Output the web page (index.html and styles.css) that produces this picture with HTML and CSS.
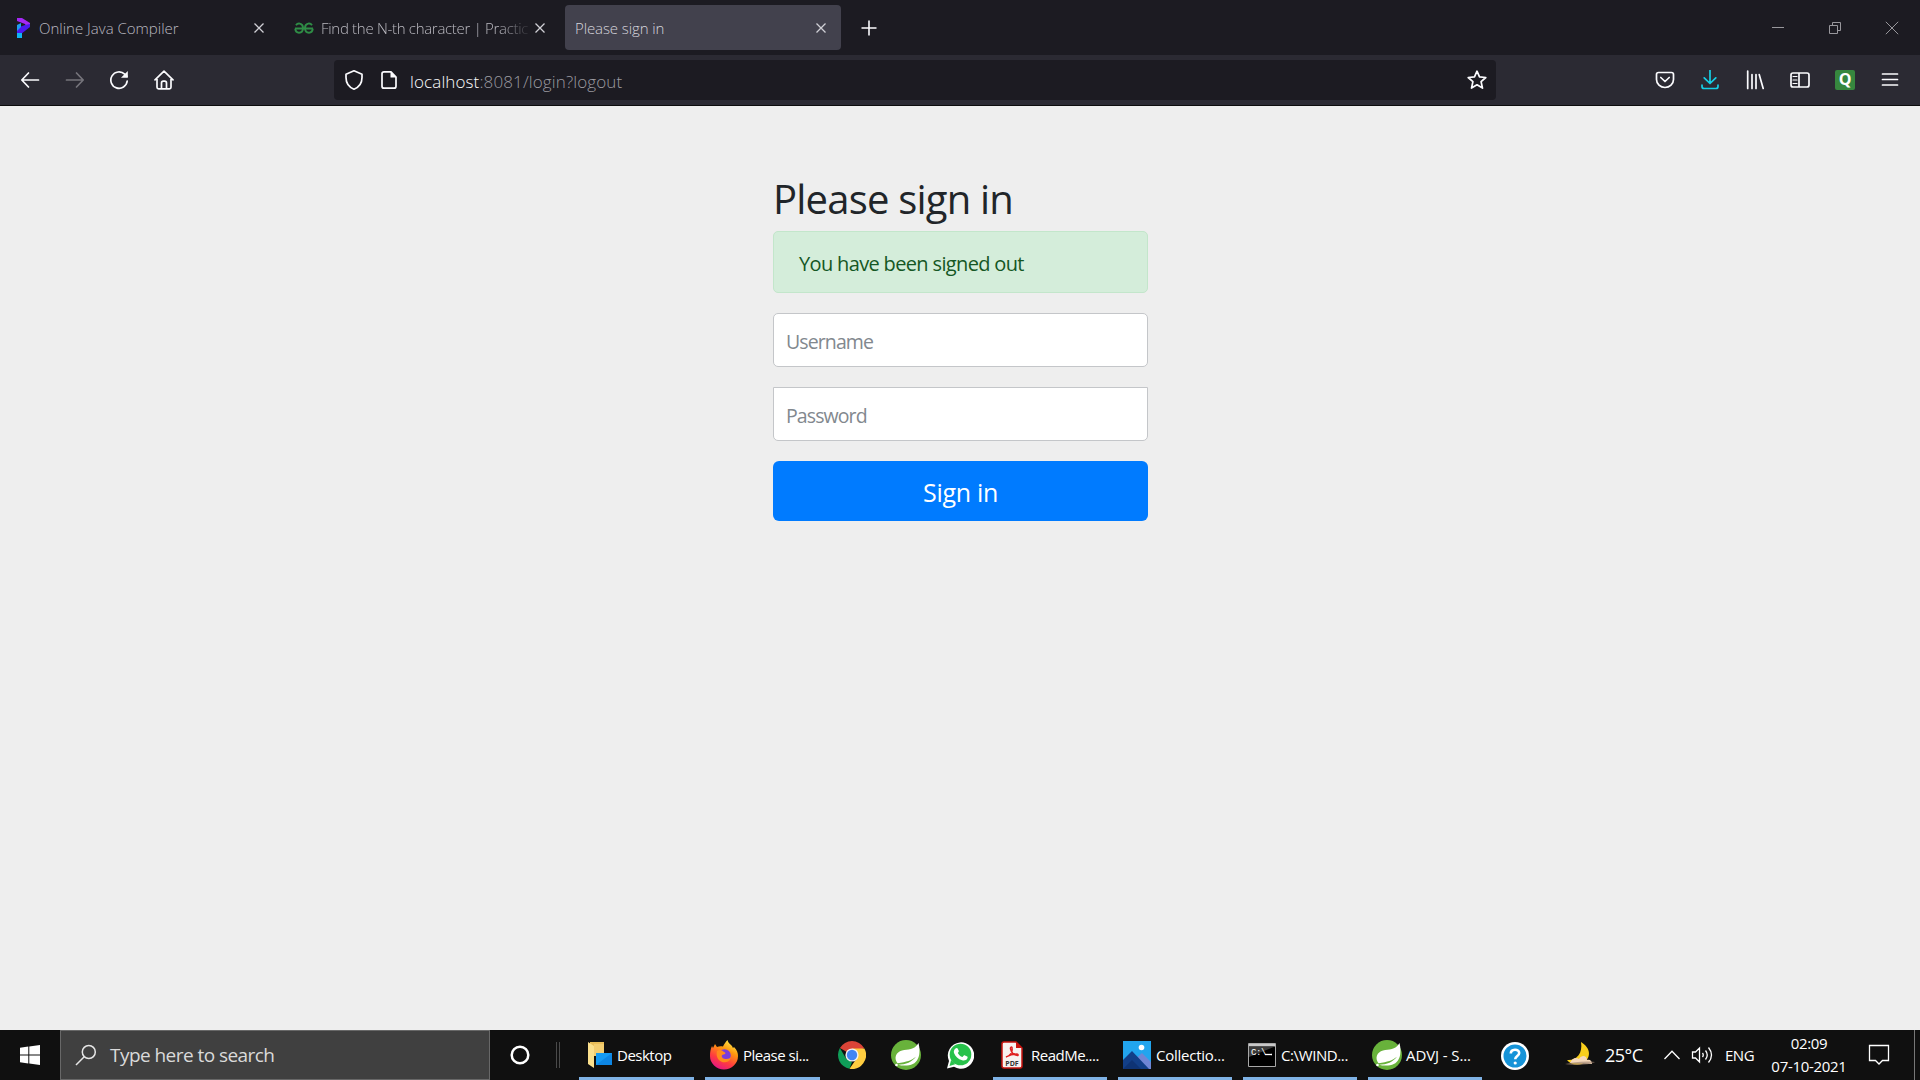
FILE: index.html
```html
<!DOCTYPE html>
<html lang="en">
<head>
<meta charset="utf-8">
<title>Please sign in</title>
<link rel="stylesheet" href="styles.css">
</head>
<body>
<header class="tabbar">
  <div class="tab">
    <svg class="tab-icon" width="20" height="22" viewBox="0 0 20 22"><path d="M4 1h5l8 5v3l-3 2-2-4-8-3z" fill="#a428f5"/><path d="M17 7v3l-9 7-4-1v-5l8-3z" fill="#4b19f0"/><path d="M4 8l4-2v4l-4 4z" fill="#1f9df0"/><path d="M4 16h5v5H4z" fill="#10b4f5"/></svg>
    <span class="tab-title">Online Java Compiler</span>
    <svg class="tab-close" width="12" height="12" viewBox="0 0 12 12"><path d="M1.5 1.5l9 9m0-9l-9 9"/></svg>
  </div>
  <div class="tab">
    <svg class="tab-icon" width="20" height="22" viewBox="0 0 20 22" fill="none" stroke="#2f8d46" stroke-width="1.9"><path d="M1 11.5h18M2 8.2c1-1.5 2.6-2 4-1.6 2 .5 3 2.2 3 4.4 0 3-1.7 4.7-4 4.7-2.2 0-3.5-1.4-3.8-4M18 8.2c-1-1.5-2.6-2-4-1.6-2 .5-3 2.2-3 4.4 0 3 1.7 4.7 4 4.7 2.2 0 3.5-1.4 3.8-4"/></svg>
    <span class="tab-title fade">Find the N-th character | Practic</span>
    <svg class="tab-close" width="12" height="12" viewBox="0 0 12 12"><path d="M1.5 1.5l9 9m0-9l-9 9"/></svg>
  </div>
  <div class="tab active">
    <span class="tab-title">Please sign in</span>
    <svg class="tab-close" width="12" height="12" viewBox="0 0 12 12"><path d="M1.5 1.5l9 9m0-9l-9 9"/></svg>
  </div>
  <svg class="new-tab" width="16" height="16" viewBox="0 0 16 16"><path d="M8 .5v15M.5 8h15"/></svg>
  <div class="window-controls">
    <svg width="14" height="14" viewBox="0 0 14 14"><path d="M1 6.5h12"/></svg>
    <svg width="14" height="14" viewBox="0 0 14 14"><path d="M1.5 4.5h8v8h-8zM4.5 4.5v-3h8v8h-3"/></svg>
    <svg width="14" height="14" viewBox="0 0 14 14"><path d="M.8.8l12.4 12.400M13.2.8L.8 13.2"/></svg>
  </div>
</header>

<nav class="toolbar">
  <div class="nav-buttons">
    <svg width="20" height="20" viewBox="0 0 20 20"><path d="M18.5 10H2M8.5 3L1.800 10l6.700 7"/></svg>
    <svg class="disabled" width="20" height="20" viewBox="0 0 20 20"><path d="M1.500 10H18M11.500 3l6.700 7-6.700 7"/></svg>
    <svg width="20" height="20" viewBox="0 0 20 20"><path d="M18.200 11a8.200 8.200 0 1 1-2.500-6.800L18 6.300"/><path class="solid" d="M18.800 1v6.800H12z"/></svg>
    <svg width="20" height="20" viewBox="0 0 20 20"><path d="M1 9.800l9-8.600 9 8.600M3 9v8.200q0 1.600 1.600 1.600h10.800q1.600 0 1.600-1.600V9M7.500 18.500V13q0-1.800 1.800-1.800h1.400q1.800 0 1.800 1.800v5.500"/></svg>
  </div>
  <div class="urlbar">
    <svg width="20" height="22" viewBox="0 0 20 22"><path d="M10 1.800L2 5.200v3.300c0 5.800 3 9.700 8 11.700 5-2 8-5.900 8-11.700V5.200z"/></svg>
    <svg width="18" height="20" viewBox="0 0 18 20"><path d="M11 1.800H4Q2 1.800 2 3.800v12.400q0 2 2 2h10q2 0 2-2V7z"/><path class="solid" d="M10.500 1.500V7.500H16.500z"/></svg>
    <span class="url">localhost<span class="url-path">:8081/login?logout</span></span>
    <svg class="star" width="22" height="22" viewBox="0 0 22 22"><path d="M11 2.200l2.500 5.700 6.300.6-4.700 4.200 1.400 6.400-5.500-3.300-5.500 3.300 1.400-6.400L2.200 8.500l6.300-.6z"/></svg>
  </div>
  <div class="toolbar-actions">
    <svg width="20" height="20" viewBox="0 0 20 20"><path d="M3.500 2.500h13q2 0 2 2V9.500a8.500 8 0 0 1-17 0V4.500q0-2 2-2z"/><path d="M5.800 7.500L10 11.500l4.200-4"/></svg>
    <svg class="download" width="20" height="20" viewBox="0 0 20 20"><path d="M10 0v13M4.200 7.800L10 13.500l5.800-5.700M2 15v1.500q0 2 2 2h12q2 0 2-2V15"/></svg>
    <svg width="20" height="20" viewBox="0 0 20 20"><path d="M2.700 1v17.500M7 4.500v14M11 4.500v14M14.200 4.500l4 14"/></svg>
    <svg class="sidebar" width="22" height="20" viewBox="0 0 22 20"><path d="M4 3h14q2 0 2 2v10q0 2-2 2H4q-2 0-2-2V5q0-2 2-2zM10 3v14"/><path class="thin" d="M4 6.500h4M4 10h4M4 13.500h4"/></svg>
    <span class="q-badge">Q</span>
    <svg width="20" height="20" viewBox="0 0 20 20"><path d="M2.500 4h15M2.500 9.500h15M2.500 15h15"/></svg>
  </div>
</nav>

<main class="page">
  <form class="signin">
    <h1>Please sign in</h1>
    <div class="alert">You have been signed out</div>
    <input class="field username" type="text" placeholder="Username">
    <input class="field password" type="password" placeholder="Password">
    <button class="submit" type="button">Sign in</button>
  </form>
</main>

<footer class="taskbar">
  <div class="start"><svg width="20" height="20" viewBox="0 0 20 20" fill="#fff"><path d="M0 2.800l8.300-1.200v7.900H0zM9.300 1.400L20 0v9.500H9.300zM0 10.500h8.300v7.900L0 17.200zM9.300 10.500H20V20L9.300 18.600z"/></svg></div>
  <div class="search">
    <svg width="22" height="22" viewBox="0 0 22 22" fill="none" stroke="#e6e6e6" stroke-width="1.500"><circle cx="13.800" cy="8" r="6.500"/><path d="M9.200 12.700L1 21"/></svg>
    <span>Type here to search</span>
  </div>
  <div class="cortana"><svg width="22" height="22" viewBox="0 0 22 22"><circle cx="11" cy="11" r="8.300" fill="none" stroke="#fff" stroke-width="2.500"/></svg></div>
  <div class="divider"></div>

  <div class="task open desktop">
    <svg width="26" height="28" viewBox="0 0 26 28"><path d="M3 1h14v14H3z" fill="#e9bd58"/><path d="M1 1l6 4v22l-6-4z" fill="#fbe08d"/><path d="M7 3h10v12H7z" fill="#f3cd70"/><path d="M9 12h16v12H9z" fill="#159bf3"/><path d="M9 24L25 12v12z" fill="#0d86e4"/></svg>
    <span>Desktop</span>
  </div>
  <div class="task open firefox">
    <svg width="30" height="30" viewBox="0 0 30 30"><defs><linearGradient id="ff" x1=".8" y1="0" x2=".3" y2="1"><stop offset="0" stop-color="#fff44f"/><stop offset=".35" stop-color="#ff980e"/><stop offset=".7" stop-color="#ff3b40"/><stop offset="1" stop-color="#e31587"/></linearGradient></defs><path d="M3 6l1 2 2-4 2 3c2-1 4-1 6-.5C15 4 17 1.500 18.500 0c.5 3 3 4 4.500 6 .5 1 1 2 1 2l1-1c3 3 4 6 4 9a14 13.500 0 0 1-28 0c0-4 .5-7 2-10z" fill="url(#ff)"/><circle cx="15.500" cy="15.500" r="6.300" fill="#7a3ddb"/><path d="M8 11c3-2 5-1 7 1 1 0 2 1 1 2l-3 1c-1 3 2 4 4 4 3 0 4-1 5-2-1 5-6 6-9 5-5-2-6-7-5-11z" fill="#ff8a1c"/></svg>
    <span>Please si...</span>
  </div>
  <div class="task pinned first">
    <svg width="28" height="28" viewBox="0 0 28 28"><path d="M14 14L1.900 7A14 14 0 0 1 26.100 7z" fill="#db4437"/><path d="M1.900 7L8 17.500l6 3.500-2.500 6.800A14 14 0 0 1 1.900 7z" fill="#0f9d58"/><path d="M14 7.500h12.400A14 14 0 0 1 11.500 27.800L19 17z" fill="#ffcd40"/><circle cx="14" cy="14" r="6.600" fill="#f1f1f1"/><circle cx="14" cy="14" r="5.200" fill="#4285f4"/></svg>
  </div>
  <div class="task pinned">
    <svg width="30" height="30" viewBox="0 0 30 30"><circle cx="15" cy="15" r="15" fill="#68b23b"/><path d="M27.500 3c2.500 10 1 22-11.500 22.500-3 .1-6 .2-9-.8 8 0 14-3 18-8-5 4-9 5-18.500 6.500C2.500 18 5 12 11 10.500c6-1.500 12 0 16.500-7.500z" fill="#fff"/><circle cx="5.500" cy="25" r="1.300" fill="#fff"/></svg>
  </div>
  <div class="task pinned">
    <svg width="28" height="28" viewBox="0 0 28 28"><path d="M1 27.500L3 20A13.200 13.200 0 1 1 8 25.700z" fill="#fff"/><circle cx="14.500" cy="13.500" r="10.800" fill="#28c24b"/><path d="M3.500 25l1.600-6 4 4.300z" fill="#28c24b"/><path d="M9.500 7.500c1-1 2-.5 2.300.2l1 2.300c.2.600-.6 1.400-1 1.900 1 2 2.500 3.300 4.700 4.200l1.300-1.500c.4-.4.8-.4 1.200-.2l2.200 1.200c.6.3.5 1.200.1 2-1 2-3.300 2.300-5.200 1.700-4-1.200-6.700-3.700-8.100-7.300-.6-1.800.3-3.500 1.500-4.500z" fill="#fff"/></svg>
  </div>
  <div class="task open pdf">
    <svg width="22" height="28" viewBox="0 0 22 28"><path d="M3 1h12l6 6v18q0 2-2 2H3q-2 0-2-2V3q0-2 2-2z" fill="#f7f2f0" stroke="#c9140f" stroke-width="1.500"/><path d="M15 1v6h6z" fill="#c9140f"/><path d="M5 16c4-1 7-5 6-9 0-2-2-1-1.500 1 1 4 3 6 7 6.500 1 0 1-1.500-1-1.500-4 0-7 1-10.500 3z" fill="none" stroke="#e02020" stroke-width="1.400"/><text x="11" y="24.500" class="pdf-label">PDF</text></svg>
    <span>ReadMe....</span>
  </div>
  <div class="task open photos">
    <svg width="28" height="28" viewBox="0 0 28 28"><path d="M0 0h28v28H0z" fill="#22a5ee"/><path d="M10 20l9-8 9 9v7H10z" fill="#6f86d6"/><path d="M0 19L9 10l17 18H0z" fill="#123f88"/><path d="M0 28l9-9 9 9z" fill="#0e3374"/><circle cx="18.500" cy="6.500" r="2.800" fill="#fff"/></svg>
    <span>Collectio...</span>
  </div>
  <div class="task open cmd">
    <svg width="28" height="24" viewBox="0 0 28 24"><path d="M.5.500h27v23H.5z" fill="#000" stroke="#a8a8a8"/><path d="M1 1h26v2.500H1z" fill="#c8c8c8"/><path d="M1 3.500h26L1 14z" fill="#3a3a3a"/><text x="3" y="11.500" class="cmd-label">C:\</text><path d="M17 11.500h7" stroke="#fff" stroke-width="1.300"/></svg>
    <span>C:\WIND...</span>
  </div>
  <div class="task open sts">
    <svg width="30" height="30" viewBox="0 0 30 30"><circle cx="15" cy="15" r="15" fill="#68b23b"/><path d="M27.500 3c2.500 10 1 22-11.500 22.500-3 .1-6 .2-9-.8 8 0 14-3 18-8-5 4-9 5-18.500 6.500C2.500 18 5 12 11 10.500c6-1.500 12 0 16.500-7.500z" fill="#fff"/><circle cx="5.500" cy="25" r="1.300" fill="#fff"/></svg>
    <span>ADVJ - S...</span>
  </div>
  <div class="task help">
    <svg width="28" height="28" viewBox="0 0 28 28"><circle cx="14" cy="14" r="14" fill="#fff"/><circle cx="14" cy="14" r="11.500" fill="#1593d8"/><path d="M9.800 11.500c0-5 8.400-5 8.400-.5 0 3-4 3-4 6.300" fill="none" stroke="#fff" stroke-width="2.600"/><circle cx="14.200" cy="21" r="1.600" fill="#fff"/></svg>
  </div>

  <div class="tray">
    <div class="weather">
      <svg width="30" height="26" viewBox="0 0 30 26"><path d="M16 0c10 6 11 16 1 22-6 2-12 0-15-4 9 1 16-6 14-18z" fill="#f9cf1c"/><path d="M5 21c2-5 6-6 9-4 3-5 8-3 8 1 3-1 5 1 5 4z" fill="#f6d9bb"/><path d="M0 22c8-2 20-3 30-2-4 3-22 4-30 2z" fill="#9a7f6c" opacity=".6"/></svg>
      <span>25°C</span>
    </div>
    <svg class="chevron" width="18" height="12" viewBox="0 0 18 12"><path d="M1.500 10L9 2.200 16.500 10"/></svg>
    <svg class="speaker" width="22" height="20" viewBox="0 0 22 20"><path d="M1.500 7h3l4-4v14l-4-4h-3zM11.500 8q1.500 2 0 4M14.500 5.500q3.500 4.500 0 9M17.500 2.500q6 7.500 0 15"/></svg>
    <span class="lang">ENG</span>
    <div class="clock"><span>02:09</span><span class="date">07-10-2021</span></div>
    <svg class="notice" width="22" height="22" viewBox="0 0 22 22"><path d="M1.500 1.500h19v15h-6L11 20l-3.500-3.500h-6z"/></svg>
    <div class="show-desktop"></div>
  </div>
</footer>
</body>
</html>
```
FILE: styles.css
```css
* { box-sizing: border-box; }
body {
  margin: 0;
  width: 1920px;
  height: 1080px;
  overflow: hidden;
  display: flex;
  flex-direction: column;
  background: #eee;
  font-family: "Open Sans", "Noto Sans", sans-serif;
}
svg { flex: none; display: block; }

.tabbar {
  height: 55px;
  flex: none;
  display: flex;
  align-items: center;
  gap: 5px;
  padding-left: 3px;
  background: #1c1b22;
}
.tab {
  width: 276px;
  height: 45px;
  display: flex;
  align-items: center;
  padding: 0 14px 0 10px;
  border-radius: 4px;
  color: #bab9c0;
  font-size: 15px;
  font-weight: 300;
}
.tab.active { background: #42414d; color: #d5d4dc; letter-spacing: -0.1px; }
.tab-icon { margin-right: 6px; }
.tab-title { flex: 1; white-space: nowrap; }
.fade {
  padding-left: 1px;
  letter-spacing: -0.3px;
  -webkit-mask-image: linear-gradient(to right, #000 180px, transparent 212px);
  mask-image: linear-gradient(to right, #000 180px, transparent 212px);
}
.tab-close { stroke: #d0d0d6; stroke-width: 1.3; }
.new-tab { margin-left: 15px; stroke: #fbfbfe; stroke-width: 1.6; }
.window-controls { margin-left: auto; padding-right: 21px; display: flex; gap: 43px; }
.window-controls svg { fill: none; stroke: #98979c; stroke-width: 1; }

.toolbar {
  height: 51px;
  flex: none;
  display: flex;
  align-items: center;
  padding: 0 20px;
  background: #2b2a33;
  border-bottom: 1px solid #0c0c0d;
}
.toolbar svg { fill: none; stroke: #fbfbfe; stroke-width: 1.7; stroke-linecap: round; stroke-linejoin: round; }
.toolbar svg.disabled { stroke: #75747b; }
.toolbar svg.download { stroke: #16cfe6; }
.toolbar .solid { fill: #fbfbfe; stroke: none; }
.toolbar .thin { stroke-width: 1.2; }
.nav-buttons { display: flex; gap: 24.7px; width: 314px; }
.urlbar {
  width: 1162px;
  height: 40px;
  display: flex;
  align-items: center;
  padding: 0 8px 0 10px;
  border-radius: 4px;
  background: #1c1b22;
}
.urlbar svg + svg { margin-left: 16px; }
.url { margin-left: 12px; flex: 1; padding-top: 2px; color: #fbfbfe; font-size: 17px; font-weight: 300; letter-spacing: 0.12px; }
.url-path { color: #9b9aa0; }
.toolbar-actions { margin-left: auto; display: flex; align-items: center; gap: 25px; }
.toolbar-actions .sidebar { margin: 0 -1px; }
.q-badge {
  width: 20px;
  height: 20px;
  border-radius: 2px;
  background: #36873e;
  color: #fff;
  font-size: 16px;
  line-height: 19px;
  font-weight: 700;
  text-align: center;
}

.page { flex: 1; background: #eee; }
.signin { width: 375px; margin: 0 auto 0 773px; padding-top: 69px; }
.signin h1 { margin: 0 0 8px; height: 48px; line-height: 48px; font-size: 40px; font-weight: 400; letter-spacing: -0.8px; color: #212529; white-space: nowrap; }
.alert { height: 62px; margin-bottom: 20px; padding-left: 25px; line-height: 63px; border: 1px solid #c3e6cb; border-radius: 5px; background: #d4edda; color: #155724; font-size: 20px; letter-spacing: -0.65px; }
.field { display: block; width: 100%; height: 54px; margin: 0 0 20px; padding: 2px 12px 0; border: 1px solid #c4c6c9; border-radius: 5px; background: #fff; font-family: inherit; font-size: 19.5px; letter-spacing: -0.9px; }
.field::placeholder { color: #82888e; opacity: 1; }
.password { border-radius: 0 0 5px 5px; }
.submit { display: block; width: 100%; height: 60px; padding: 2px 0 0; border: 0; border-radius: 6px; background: #007bff; color: #fff; font-family: inherit; font-size: 25px; letter-spacing: -0.3px; text-align: center; }

.taskbar { height: 50px; flex: none; display: flex; background: #101010; color: #fff; font-size: 15px; white-space: nowrap; }
.start { width: 60px; display: grid; place-items: center; }
.search { width: 430px; display: flex; align-items: center; gap: 13px; padding-left: 14px; border: 1px solid #686868; background: #404040; color: #dadada; font-size: 19px; letter-spacing: -0.55px; }
.cortana { width: 60px; display: grid; place-items: center; }
.divider { width: 4px; height: 26px; margin: 12px 19px 0 6px; border: solid #4a4a4a; border-width: 0 1px; }
.task { height: 50px; display: flex; align-items: center; letter-spacing: -0.5px; }
.open { width: 114px; border-bottom: 3px solid #7fb2e5; padding-top: 3px; }
.desktop, .firefox { width: 115px; }
.desktop { padding-left: 8px; gap: 4px; }
.firefox { margin-left: 11px; padding-left: 4px; gap: 4px; }
.pinned { width: 54px; justify-content: center; }
.pinned.first { margin-left: 5px; }
.pdf { margin-left: 6px; padding-left: 8px; gap: 8px; }
.photos, .cmd, .sts { margin-left: 11px; padding-left: 5px; gap: 5px; }
.photos { letter-spacing: -0.25px; }
.cmd { letter-spacing: -0.4px; }
.sts { padding-left: 4px; gap: 4px; letter-spacing: -0.1px; }
.help { margin-left: 6px; width: 54px; justify-content: center; padding-top: 2px; }
.pdf-label { font-size: 7px; font-weight: 700; letter-spacing: 0; text-anchor: middle; fill: #333; }
.cmd-label { font: 9px "Liberation Mono", monospace; fill: #fff; }
.tray { flex: 1; display: flex; align-items: center; }
.tray svg { fill: none; }
.weather { display: flex; align-items: center; gap: 10px; margin-left: 23px; width: 98px; font-size: 18px; letter-spacing: -0.5px; }
.chevron, .speaker, .notice { stroke: #fff; stroke-width: 1.3; }
.speaker { margin-left: 10px; }
.lang { margin-left: 12px; width: 46px; letter-spacing: -0.5px; }
.clock { width: 76px; display: flex; flex-direction: column; align-items: center; line-height: 23px; letter-spacing: -0.3px; }
.notice { margin-left: 21px; }
.show-desktop { margin-left: auto; width: 6px; height: 50px; border-left: 1px solid #777; }
```
